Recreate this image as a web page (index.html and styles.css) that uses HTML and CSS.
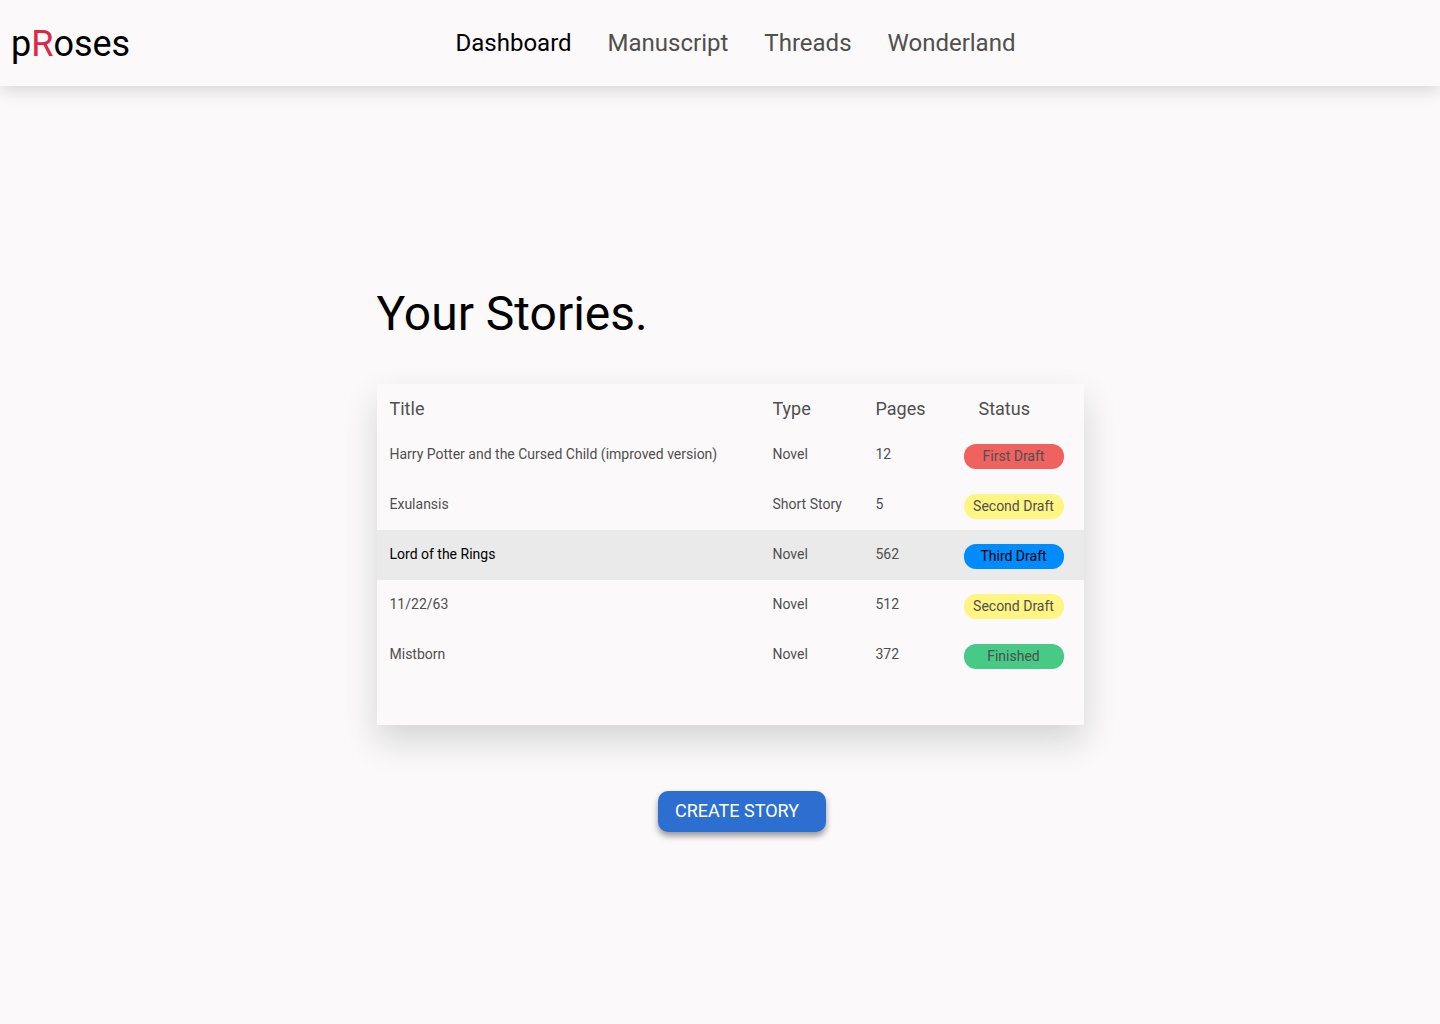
FILE: index.html
```html
<!DOCTYPE html>
<html lang="en">
<head>
<meta charset="utf-8">
<meta name="viewport" content="width=device-width, initial-scale=1">
<title>pRoses</title>
<link rel="stylesheet" href="styles.css">
</head>
<body>
<header class="topbar">
  <a class="logo" href="#">p<span class="logo-accent">R</span>oses</a>
  <nav class="nav">
    <a class="nav-link is-active" href="#">Dashboard</a>
    <a class="nav-link" href="#">Manuscript</a>
    <a class="nav-link" href="#">Threads</a>
    <a class="nav-link" href="#">Wonderland</a>
  </nav>
</header>
<main class="stories">
  <h1 class="heading">Your Stories.</h1>
  <div class="card">
    <table class="table">
      <thead>
        <tr><th class="col-title">Title</th><th class="col-type">Type</th><th class="col-pages">Pages</th><th class="col-status">Status</th></tr>
      </thead>
      <tbody>
        <tr><td>Harry Potter and the Cursed Child (improved version)</td><td>Novel</td><td>12</td><td><span class="pill pill-first">First Draft</span></td></tr>
        <tr><td>Exulansis</td><td>Short Story</td><td>5</td><td><span class="pill pill-second">Second Draft</span></td></tr>
        <tr class="is-selected"><td>Lord of the Rings</td><td>Novel</td><td>562</td><td><span class="pill pill-third">Third Draft</span></td></tr>
        <tr><td>11/22/63</td><td>Novel</td><td>512</td><td><span class="pill pill-second">Second Draft</span></td></tr>
        <tr><td>Mistborn</td><td>Novel</td><td>372</td><td><span class="pill pill-done">Finished</span></td></tr>
      </tbody>
    </table>
  </div>
  <button class="create" type="button">CREATE STORY</button>
</main>
</body>
</html>
```
FILE: styles.css
```css
* {
  box-sizing: border-box;
}

body {
  margin: 0;
  min-height: 100vh;
  background: #fbf9fa;
  color: #000;
  font-family: Roboto, "Liberation Sans", sans-serif;
}

a {
  color: inherit;
  text-decoration: none;
}

.topbar {
  display: grid;
  grid-template-columns: 1fr auto 1fr;
  align-items: center;
  padding: 22px 0 20px 11px;
  box-shadow: 0 4px 16px rgba(0, 0, 0, 0.15);
}

.logo {
  font-size: 36px;
  line-height: 44px;
}

.logo-accent {
  color: #dc2845;
}

.nav {
  display: flex;
  gap: 36px;
  padding: 0 0 2px 20px;
  font-size: 24px;
  line-height: 28px;
}

.nav-link {
  color: #4f4f4f;
}

.nav-link.is-active {
  color: #000;
}

.stories {
  display: flex;
  flex-direction: column;
  width: 100%;
  max-width: 727px;
  margin: 0 auto;
  padding: 200px 0 48px 20px;
}

.heading {
  margin: 0 0 42px;
  font-size: 48px;
  font-weight: 400;
  line-height: 56px;
}

.card {
  padding-bottom: 45px;
  background: #fbf9fa;
  box-shadow: 0 16px 32px rgba(20, 30, 25, 0.16);
}

.table {
  width: 100%;
  border-collapse: collapse;
  table-layout: fixed;
  color: #4f4f4f;
  font-size: 14px;
  line-height: 16px;
}

th {
  height: 46px;
  padding: 4px 0 0;
  font-size: 18px;
  font-weight: 400;
  text-align: left;
}

td {
  height: 50px;
  padding: 0 0 2px;
}

td:last-child {
  padding: 2px 0 0;
}

th:first-child,
td:first-child {
  padding-left: 13px;
}

.col-title {
  width: 396px;
}

.col-type {
  width: 103px;
}

.col-pages {
  width: 88px;
}

th.col-status {
  padding-left: 15px;
}

.is-selected {
  background: #e9eae9;
}

.is-selected td:first-child,
.pill-third {
  color: #000;
}

.pill {
  display: block;
  width: 100px;
  border-radius: 12px;
  line-height: 25px;
  text-align: center;
}

.pill-first {
  background: #f06260;
}

.pill-second {
  background: #fff582;
}

.pill-third {
  background: #008cff;
}

.pill-done {
  background: #46ca86;
}

.create {
  align-self: center;
  margin: 66px 0 0 24px;
  padding: 9px 27px 11px 17px;
  border: 0;
  border-radius: 10px;
  background: #2d6fd0;
  box-shadow: 0 4px 6px rgba(0, 0, 0, 0.4);
  color: #fff;
  font: 18px/21px Roboto, "Liberation Sans", sans-serif;
}
```
